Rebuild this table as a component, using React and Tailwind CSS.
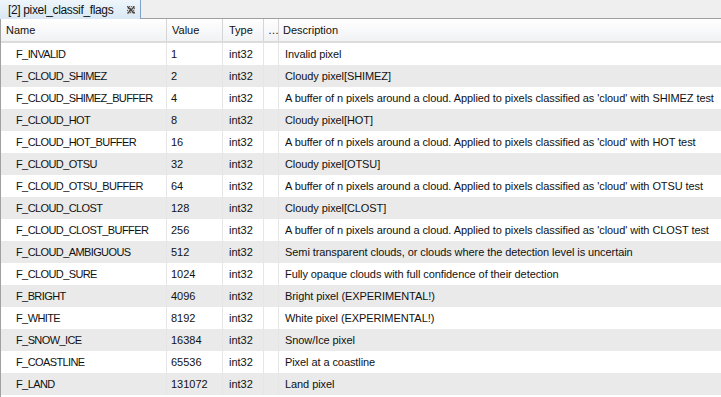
import React from "react";

const rows = [
  ["F_INVALID", "1", "Invalid pixel"],
  ["F_CLOUD_SHIMEZ", "2", "Cloudy pixel[SHIMEZ]"],
  ["F_CLOUD_SHIMEZ_BUFFER", "4", "A buffer of n pixels around a cloud. Applied to pixels classified as 'cloud' with SHIMEZ test"],
  ["F_CLOUD_HOT", "8", "Cloudy pixel[HOT]"],
  ["F_CLOUD_HOT_BUFFER", "16", "A buffer of n pixels around a cloud. Applied to pixels classified as 'cloud' with HOT test"],
  ["F_CLOUD_OTSU", "32", "Cloudy pixel[OTSU]"],
  ["F_CLOUD_OTSU_BUFFER", "64", "A buffer of n pixels around a cloud. Applied to pixels classified as 'cloud' with OTSU test"],
  ["F_CLOUD_CLOST", "128", "Cloudy pixel[CLOST]"],
  ["F_CLOUD_CLOST_BUFFER", "256", "A buffer of n pixels around a cloud. Applied to pixels classified as 'cloud' with CLOST test"],
  ["F_CLOUD_AMBIGUOUS", "512", "Semi transparent clouds, or clouds where the detection level is uncertain"],
  ["F_CLOUD_SURE", "1024", "Fully opaque clouds with full confidence of their detection"],
  ["F_BRIGHT", "4096", "Bright pixel (EXPERIMENTAL!)"],
  ["F_WHITE", "8192", "White pixel (EXPERIMENTAL!)"],
  ["F_SNOW_ICE", "16384", "Snow/Ice pixel"],
  ["F_COASTLINE", "65536", "Pixel at a coastline"],
  ["F_LAND", "131072", "Land pixel"],
];

// small checkered "x" used by the tab close button
const CloseIcon = () => (
  <svg width="8" height="8" viewBox="0 0 8 8" className="block">
    <rect x="0" y="0" width="8" height="8" fill="#d4d4d4" />
    {[0, 2, 4, 6].map((x) =>
      [0, 2, 4, 6].map((y) => (
        <rect key={`${x}-${y}`} x={x + ((y / 2) % 2)} y={y} width="1" height="1" fill="#666" />
      ))
    )}
    <path d="M0.5 0.5L7.5 7.5M7.5 0.5L0.5 7.5" stroke="#444" strokeWidth="1.2" />
  </svg>
);

export default function App() {
  return (
    <div
      className="w-[721px] h-[397px] overflow-hidden bg-white text-[11px] text-[#111]"
      style={{ fontFamily: '"Liberation Sans", Arial, sans-serif' }}
    >
      <div className="flex h-[19px] bg-[#efefef]">
        <div className="flex items-center w-[141px] h-[19px] pt-[1px] pl-[8px] pr-[5px] bg-gradient-to-b from-[#eef5fb] to-[#d9e8f4] border-r border-[#7fa3c8] text-[12px]">
          <span className="flex-1 tracking-[-0.35px]">[2] pixel_classif_flags</span>
          <CloseIcon />
        </div>
        <div className="flex-1 border-b border-[#a0a0a0]" />
      </div>
      <div className="border-l border-[#a0a0a0] h-[378px]">
        <div className="flex h-[24px] bg-gradient-to-b from-[#ffffff] to-[#f1f2f4] border-b-2 border-[#dcdcdc] items-center">
          <div className="w-[166px] pl-[5px] border-r border-[#d5d5d5] h-full flex items-center">Name</div>
          <div className="w-[56px] pl-[5px] border-r border-[#d5d5d5] h-full flex items-center">Value</div>
          <div className="w-[41px] pl-[6px] border-r border-[#d5d5d5] h-full flex items-center">Type</div>
          <div className="w-[15px] pl-[4px] border-r border-[#d5d5d5] h-full flex items-center">…</div>
          <div className="flex-1 pl-[4px] h-full flex items-center">Description</div>
        </div>
        {rows.map(([name, value, desc], i) => (
          <div
            key={name}
            className={`flex h-[22px] items-center ${i % 2 === 1 ? "bg-[#eaeaea]" : "bg-white"}`}
          >
            <div className="w-[166px] pl-[15px] border-r border-[#e6e6e6] h-full flex items-center whitespace-nowrap tracking-[-0.6px]">{name}</div>
            <div className="w-[56px] pl-[4px] border-r border-[#e6e6e6] h-full flex items-center">{value}</div>
            <div className="w-[41px] pl-[6px] border-r border-[#e6e6e6] h-full flex items-center">int32</div>
            <div className="w-[15px] border-r border-[#e6e6e6] h-full" />
            <div className="flex-1 pl-[6px] h-full flex items-center whitespace-nowrap tracking-[-0.08px]">{desc}</div>
          </div>
        ))}
      </div>
    </div>
  );
}
